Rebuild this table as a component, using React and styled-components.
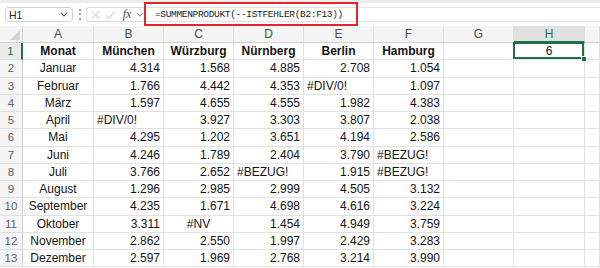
import React from 'react';
import styled, { createGlobalStyle, css } from 'styled-components';

const GREEN = '#1d7144';

const GlobalStyle = createGlobalStyle`
  html, body {
    margin: 0;
    padding: 0;
    background: #fff;
  }
  body {
    font-family: "Liberation Sans", Arial, sans-serif;
    overflow: hidden;
  }
`;

const Window = styled.div`
  width: 600px;
  height: 268px;
  overflow: hidden;
  display: flex;
  flex-direction: column;
  background: #fff;
`;

const Toolbar = styled.div`
  flex: none;
  height: 26px;
  box-sizing: border-box;
  border-top: 3px solid #ececec;
  display: flex;
  align-items: center;
  padding-left: 5px;
  background: #fff;
`;

const NameBox = styled.div`
  width: 68px;
  height: 15px;
  box-sizing: border-box;
  border: 1px solid #d2d2d2;
  border-radius: 3px;
  display: flex;
  align-items: center;
  justify-content: space-between;
  padding: 0 4px 0 3px;
  font-size: 10.5px;
  color: #262626;
`;

const Dots = styled.div`
  width: 13px;
  text-align: center;
  color: #6b6b6b;
  font-size: 12px;
  line-height: 15px;
`;

const IconBox = styled.div`
  width: 58px;
  height: 15px;
  box-sizing: border-box;
  border: 1px solid #dcdcdc;
  border-right: none;
  border-radius: 3px 0 0 3px;
  display: flex;
  align-items: center;
  gap: 5px;
  padding-left: 4px;
`;

const Fx = styled.span`
  font-family: "Liberation Serif", "Times New Roman", serif;
  font-style: italic;
  font-size: 12px;
  color: #4a4a4a;
  margin-left: 2px;
`;

const FormulaInput = styled.div`
  position: relative;
  flex: 1;
  height: 15px;
  box-sizing: border-box;
  border: 1px solid #e2e2e2;
  border-right: none;
  display: flex;
  align-items: center;
  padding-left: 10px;
  font-family: "Liberation Mono", "Courier New", monospace;
  font-size: 9.5px;
  letter-spacing: -0.33px;
  color: #1a1a1a;
`;

const Highlight = styled.div`
  position: absolute;
  left: -1px;
  top: -6px;
  width: 214px;
  height: 24px;
  box-sizing: border-box;
  border: 2px solid #e3262d;
  pointer-events: none;
`;

const Sheet = styled.div`
  display: grid;
  grid-template-columns: 23px 71px 70px 70px 70px 70px 70px 70px 71px 1fr;
  grid-template-rows: 17px repeat(13, 17.25px);
`;

const Cell = styled.div`
  position: relative;
  box-sizing: border-box;
  border-right: 1px solid #e1e1e1;
  border-bottom: 1px solid #e1e1e1;
  display: flex;
  align-items: center;
  padding: 0 3px;
  font-size: 12px;
  color: #141414;
  white-space: nowrap;
  justify-content: ${(p) =>
    p.$align === 'right' ? 'flex-end' : p.$align === 'left' ? 'flex-start' : 'center'};
  font-weight: ${(p) => (p.$bold ? 700 : 400)};

  ${(p) =>
    p.$active &&
    css`
      &::after {
        content: '';
        position: absolute;
        left: -1px;
        top: -1px;
        right: 0;
        bottom: 0;
        border: 2px solid ${GREEN};
      }
    `}
`;

const FillHandle = styled.span`
  position: absolute;
  right: -3px;
  bottom: -3px;
  width: 4px;
  height: 4px;
  background: ${GREEN};
  border: 1px solid #fff;
  z-index: 2;
`;

const ColHead = styled.div`
  box-sizing: border-box;
  background: ${(p) => (p.$active ? '#e1e1e1' : '#f5f5f5')};
  border-right: 1px solid #dedede;
  border-bottom: ${(p) => (p.$active ? `2px solid ${GREEN}` : '1px solid #cfcfcf')};
  display: flex;
  align-items: center;
  justify-content: center;
  font-size: 12px;
  color: ${(p) => (p.$active ? GREEN : '#4d4d4d')};
`;

const Corner = styled.div`
  box-sizing: border-box;
  background: #f5f5f5;
  border-right: 1px solid #cfcfcf;
  border-bottom: 1px solid #cfcfcf;
  display: flex;
  align-items: flex-end;
  justify-content: flex-end;
  padding: 0 2px 2px 0;
`;

const RowHead = styled.div`
  box-sizing: border-box;
  background: ${(p) => (p.$active ? '#ebebeb' : '#f5f5f5')};
  border-right: ${(p) => (p.$active ? `2px solid ${GREEN}` : '1px solid #cfcfcf')};
  border-bottom: 1px solid #dedede;
  display: flex;
  align-items: center;
  justify-content: center;
  font-size: 11.5px;
  color: ${(p) => (p.$active ? GREEN : '#616161')};
`;

const COLS = ['A', 'B', 'C', 'D', 'E', 'F', 'G', 'H', ''];

const ROWS = [
  ['Januar', '4.314', '1.568', '4.885', '2.708', '1.054'],
  ['Februar', '1.766', '4.442', '4.353', '#DIV/0!', '1.097'],
  ['März', '1.597', '4.655', '4.555', '1.982', '4.383'],
  ['April', '#DIV/0!', '3.927', '3.303', '3.807', '2.038'],
  ['Mai', '4.295', '1.202', '3.651', '4.194', '2.586'],
  ['Juni', '4.246', '1.789', '2.404', '3.790', '#BEZUG!'],
  ['Juli', '3.766', '2.652', '#BEZUG!', '1.915', '#BEZUG!'],
  ['August', '1.296', '2.985', '2.999', '4.505', '3.132'],
  ['September', '4.235', '1.671', '4.698', '4.616', '3.224'],
  ['Oktober', '3.311', '#NV', '1.454', '4.949', '3.759'],
  ['November', '2.862', '2.550', '1.997', '2.429', '3.283'],
  ['Dezember', '2.597', '1.969', '2.768', '3.214', '3.990'],
];

const HEAD = ['Monat', 'München', 'Würzburg', 'Nürnberg', 'Berlin', 'Hamburg'];

const alignFor = (value, col) => {
  if (col === 0) return 'center';
  if (value === '#NV') return 'center';
  if (value.startsWith('#')) return 'left';
  return 'right';
};

const Chevron = ({ color = '#555' }) => (
  <svg width="8" height="5" viewBox="0 0 8 5">
    <path d="M1 1l3 3 3-3" fill="none" stroke={color} strokeWidth="1.1" />
  </svg>
);

const App = () => (
  <Window>
    <GlobalStyle />
    <Toolbar>
      <NameBox>
        H1
        <Chevron />
      </NameBox>
      <Dots>⋮</Dots>
      <IconBox>
        <svg width="10" height="10" viewBox="0 0 10 10">
          <path d="M1 1l8 8M9 1l-8 8" stroke="#bdbdbd" strokeWidth="1" />
        </svg>
        <svg width="11" height="10" viewBox="0 0 11 10">
          <path d="M1 5.5l3 3 6-7" fill="none" stroke="#bdbdbd" strokeWidth="1" />
        </svg>
        <Fx>fx</Fx>
        <Chevron color="#9a9a9a" />
      </IconBox>
      <FormulaInput>
        =SUMMENPRODUKT(--ISTFEHLER(B2:F13))
        <Highlight />
      </FormulaInput>
    </Toolbar>

    <Sheet>
      <Corner>
        <svg width="10" height="10" viewBox="0 0 10 10">
          <path d="M10 0v10H0z" fill="#d4d4d4" />
        </svg>
      </Corner>
      {COLS.map((c, i) => (
        <ColHead key={i} $active={c === 'H'}>
          {c}
        </ColHead>
      ))}

      <RowHead $active>1</RowHead>
      {HEAD.map((h) => (
        <Cell key={h} $bold>
          {h}
        </Cell>
      ))}
      <Cell />
      <Cell $active>
        6
        <FillHandle />
      </Cell>
      <Cell />

      {ROWS.map((row, r) => (
        <React.Fragment key={r}>
          <RowHead>{r + 2}</RowHead>
          {row.map((v, c) => (
            <Cell key={c} $align={alignFor(v, c)}>
              {v}
            </Cell>
          ))}
          <Cell />
          <Cell />
          <Cell />
        </React.Fragment>
      ))}
    </Sheet>
  </Window>
);

export default App;
